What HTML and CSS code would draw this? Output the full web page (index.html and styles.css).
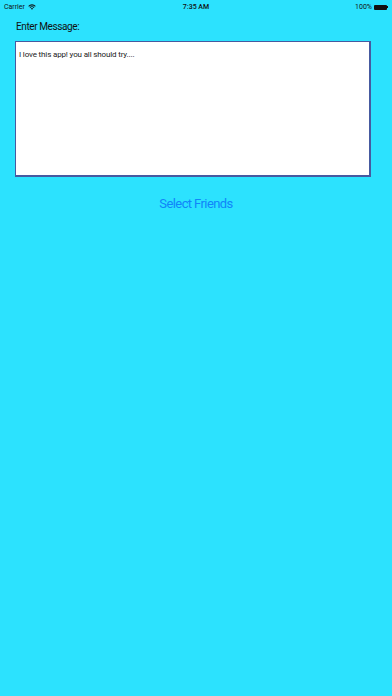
FILE: index.html
```html
<!DOCTYPE html>
<html>
    <head>
        <title>
            message
        </title>
        <link rel="stylesheet" href="styles.css">
    </head>
    <body>
        <div class="status">
            <div class="carrier">
                Carrier
                <svg class="wifi" width="8" height="6" viewBox="0 0 8 6">
                    <path d="M0.3 2 A5 5 0 0 1 7.7 2 L7 2.8 A4 4 0 0 0 1 2.8 Z" fill="#111"/>
                    <path d="M1.6 3.3 A3.2 3.2 0 0 1 6.4 3.3 L5.7 4 A2.2 2.2 0 0 0 2.3 4 Z" fill="#111"/>
                    <path d="M2.9 4.6 A1.5 1.5 0 0 1 5.1 4.6 L4 5.8 Z" fill="#111"/>
                </svg>
            </div>
            <div class="time">7:35 AM</div>
            <div class="battery">
                100%
                <span class="cell"></span><span class="tip"></span>
            </div>
        </div>
        <main class="main">
            <p class="label">Enter Message:</p>
            <textarea class="message">I love this app! you all should try....</textarea>
            <button class="select">Select Friends</button>
        </main>
    </body>
</html>
```
FILE: styles.css
```css
body{
    margin: 0;
    background-color: rgb(44, 226, 254);
    font-family: Roboto, "Liberation Sans", sans-serif;
    height: 696px;
}
p{
    margin: 0;
}
.status{
    height: 14px;
    display: flex;
    align-items: center;
    justify-content: space-between;
    padding: 0 4px;
    font-size: 7px;
    color: #111;
}
.carrier{
    display: flex;
    align-items: center;
    gap: 3px;
    width: 60px;
}
.time{
    font-weight: 500;
}
.battery{
    width: 60px;
    display: flex;
    align-items: center;
    justify-content: flex-end;
}
.cell{
    display: inline-block;
    width: 13px;
    height: 5px;
    background-color: #111;
    margin-left: 2px;
    border-radius: 1px;
}
.tip{
    display: inline-block;
    width: 1px;
    height: 2px;
    background-color: #111;
}
.main{
    padding: 7px 0 0 16px;
    display: flex;
    flex-direction: column;
}
.label{
    font-size: 10px;
    color: #111;
    height: 20px;
    letter-spacing: -0.4px;
}
.message{
    box-sizing: border-box;
    width: 356px;
    height: 136px;
    margin: 0 0 0 -1px;
    border: 1px solid rgb(70, 90, 160);
    border-right-width: 2px;
    border-bottom-width: 2px;
    background-color: white;
    resize: none;
    padding: 8px 3px;
    font-family: Roboto, "Liberation Sans", sans-serif;
    font-size: 8px;
    letter-spacing: -0.15px;
    color: #222;
    outline: none;
}
.select{
    align-self: center;
    margin: 19px 0 0 -16px;
    border: none;
    background: none;
    padding: 0;
    font-family: Roboto, "Liberation Sans", sans-serif;
    font-size: 13px;
    letter-spacing: -0.6px;
    color: rgb(16, 133, 250);
    cursor: pointer;
}
```
